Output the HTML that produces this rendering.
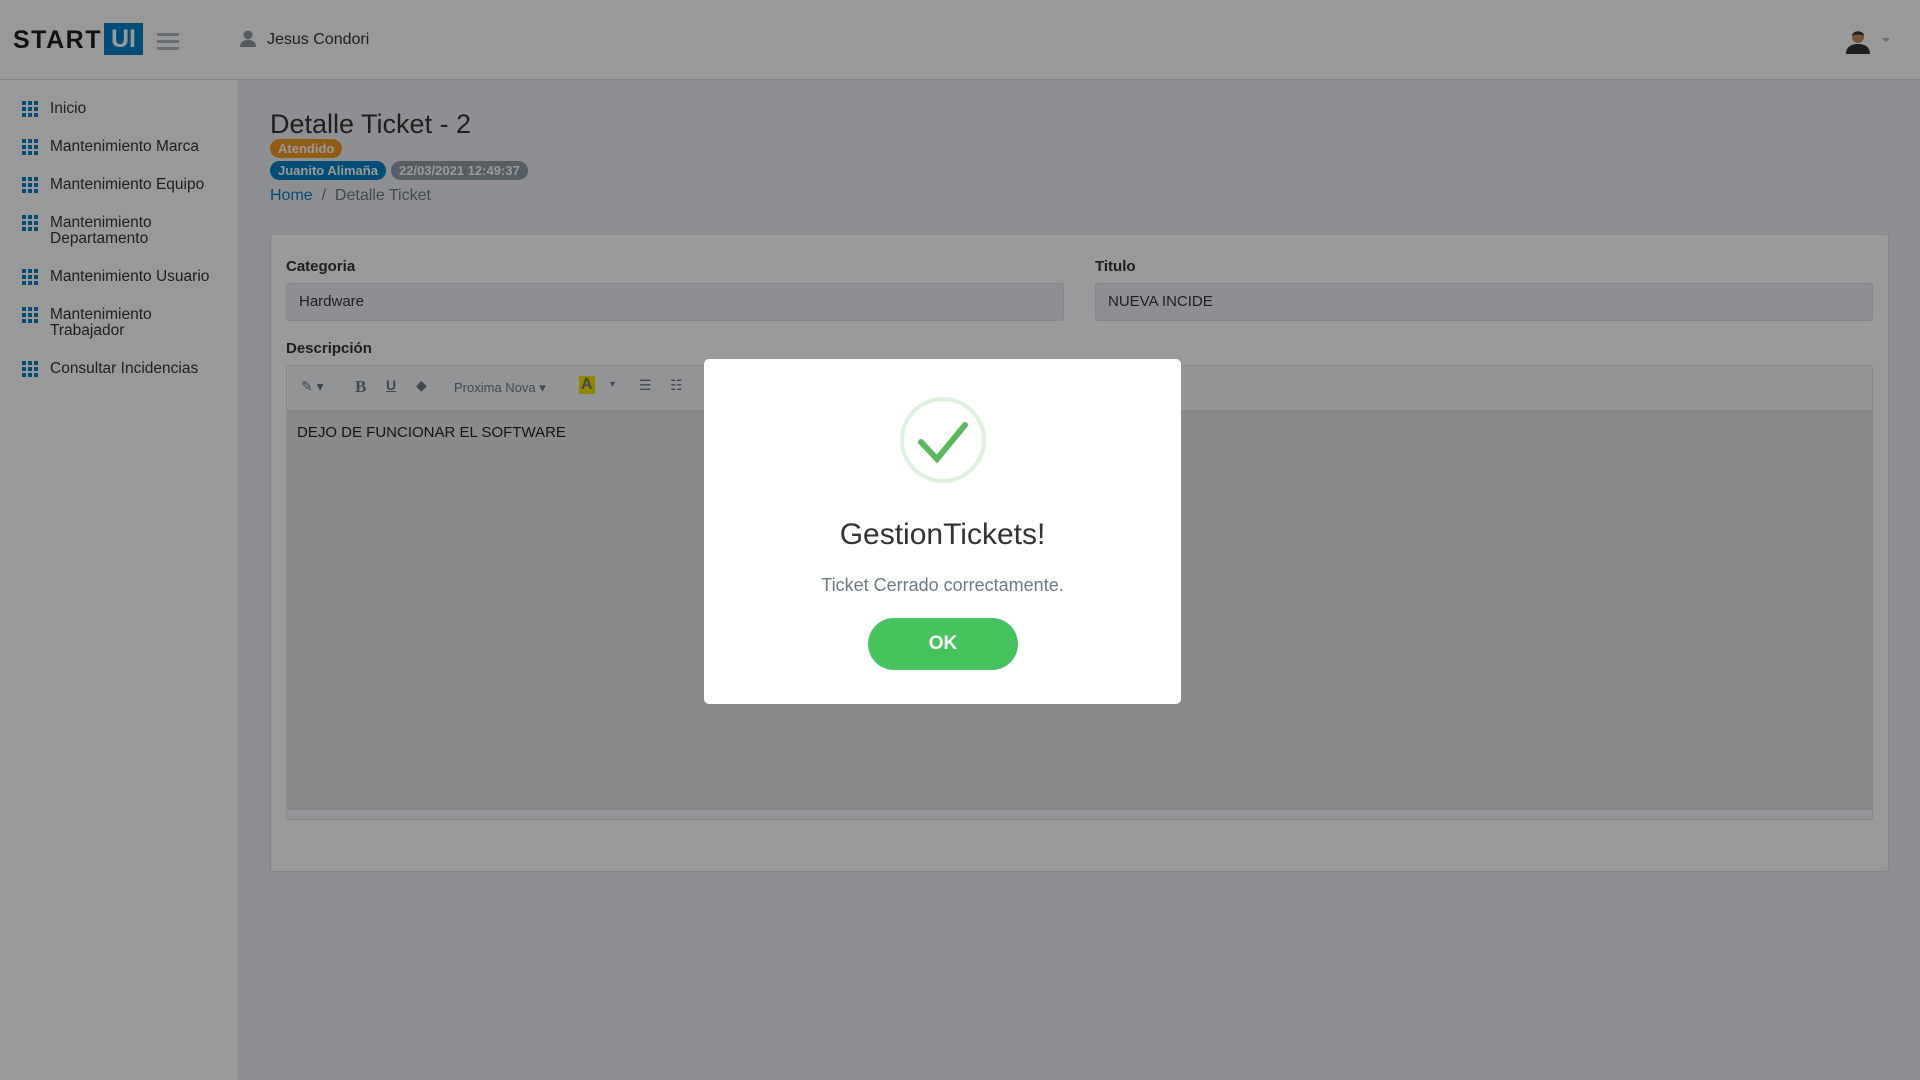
<!DOCTYPE html>
<html><head><meta charset="utf-8"><style>
*{box-sizing:border-box;margin:0;padding:0}
body{width:1920px;height:1080px;overflow:hidden;font-family:"Liberation Sans",sans-serif;background:#eceff4;position:relative;color:#343434}
.hdr{position:absolute;left:0;top:0;width:1920px;height:80px;background:#fff;border-bottom:1px solid #d8e2e7}
.side{position:absolute;left:0;top:80px;width:239px;height:1000px;background:#fff;border-right:1px solid #d8e2e7}
.logo{position:absolute;left:13px;top:26px;font-size:25px;font-weight:bold;color:#1b1f23;letter-spacing:1.5px}
.ui{position:absolute;left:104px;top:23px;width:39px;height:32px;background:#0082c6;color:#fff;font-size:25px;font-weight:bold;text-align:center;line-height:32px}
.ham{position:absolute;left:157px;top:33px;width:22px}
.ham i{display:block;height:3px;background:#adb7be;margin-bottom:4px}
.it{position:absolute;left:50px;font-size:15.5px;color:#343434;line-height:16px}
.grid{position:absolute;left:22px;width:16px;height:16px;display:grid;grid-template-columns:repeat(3,4px);gap:2px}
.grid b{background:#0082c6;width:4px;height:4px}
.badge{position:absolute;height:19px;border-radius:10px;color:#fff;font-size:13px;font-weight:bold;line-height:19px;padding:0 8px}
.card{position:absolute;left:270px;top:234px;width:1619px;height:638px;background:#fff;border:1px solid #d8e2e7;border-radius:3px}
.lbl{position:absolute;font-size:15px;font-weight:bold;color:#343434}
.inp{position:absolute;height:38px;background:#eceff4;border:1px solid #d8e2e7;border-radius:3px;font-size:15px;padding:0 12px;line-height:36px}
.ov{position:absolute;left:0;top:0;width:1920px;height:1080px;background:rgba(0,0,0,.4)}
.modal{position:absolute;left:704px;top:359px;width:477px;height:345px;background:#fff;border-radius:5px}
</style></head><body>
<div class="hdr">
<div class="logo">START</div><div class="ui">UI</div>
<div class="ham"><i></i><i></i><i></i></div>
<svg style="position:absolute;left:240px;top:30px" width="16" height="17" viewBox="0 0 16 17"><circle cx="8" cy="5" r="4.5" fill="#8a96a0"/><path d="M0 17c0-5 3-7 8-7s8 2 8 7z" fill="#8a96a0"/></svg>
<div style="position:absolute;left:267px;top:31px;font-size:16px;color:#343434">Jesus Condori</div>
<svg style="position:absolute;left:1845px;top:28px" width="26" height="26" viewBox="0 0 26 26"><circle cx="13" cy="9" r="6" fill="#c98a5a"/><path d="M7 8c0-6 12-6 12 0c-2-2-10-2-12 0z" fill="#333"/><path d="M1 26c0-7 5-10 12-10s12 3 12 10z" fill="#333"/></svg>
<div style="position:absolute;left:1882px;top:38px;border:4px solid transparent;border-top-color:#adb7be"></div>
</div>
<div class="side">
<div class="grid" style="top:21px"><b></b><b></b><b></b><b></b><b></b><b></b><b></b><b></b><b></b></div><div class="it" style="top:21px">Inicio</div>
<div class="grid" style="top:59px"><b></b><b></b><b></b><b></b><b></b><b></b><b></b><b></b><b></b></div><div class="it" style="top:59px">Mantenimiento Marca</div>
<div class="grid" style="top:97px"><b></b><b></b><b></b><b></b><b></b><b></b><b></b><b></b><b></b></div><div class="it" style="top:97px">Mantenimiento Equipo</div>
<div class="grid" style="top:135px"><b></b><b></b><b></b><b></b><b></b><b></b><b></b><b></b><b></b></div><div class="it" style="top:135px">Mantenimiento<br>Departamento</div>
<div class="grid" style="top:189px"><b></b><b></b><b></b><b></b><b></b><b></b><b></b><b></b><b></b></div><div class="it" style="top:189px">Mantenimiento Usuario</div>
<div class="grid" style="top:227px"><b></b><b></b><b></b><b></b><b></b><b></b><b></b><b></b><b></b></div><div class="it" style="top:227px">Mantenimiento<br>Trabajador</div>
<div class="grid" style="top:281px"><b></b><b></b><b></b><b></b><b></b><b></b><b></b><b></b><b></b></div><div class="it" style="top:281px">Consultar Incidencias</div>
</div>
<div style="position:absolute;left:270px;top:109px;font-size:27px;color:#343434">Detalle Ticket - 2</div>
<div class="badge" style="left:270px;top:139px;background:#f29824">Atendido</div>
<div class="badge" style="left:270px;top:161px;background:#0082c6">Juanito Alimaña</div>
<div class="badge" style="left:391px;top:161px;background:#919fa9">22/03/2021 12:49:37</div>
<div style="position:absolute;left:270px;top:187px;font-size:16px;color:#6c7a86"><span style="color:#0082c6">Home</span> &nbsp;/&nbsp; Detalle Ticket</div>
<div class="card"></div>
<div class="lbl" style="left:286px;top:258px">Categoria</div>
<div class="inp" style="left:286px;top:283px;width:778px">Hardware</div>
<div class="lbl" style="left:1095px;top:258px">Titulo</div>
<div class="inp" style="left:1095px;top:283px;width:778px">NUEVA INCIDE</div>
<div class="lbl" style="left:286px;top:340px">Descripción</div>
<div style="position:absolute;left:286px;top:365px;width:1587px;height:455px;border:1px solid #d8e2e7;border-radius:3px;background:#e6e6e6">
<div style="height:45px;background:#f6f8fa;border-bottom:1px solid #d8e2e7;position:relative;font-size:14px;color:#6c7a86">
<span style="position:absolute;left:14px;top:12px">✎ ▾</span>
<span style="position:absolute;left:68px;top:11px;font-weight:bold;font-family:'Liberation Serif';font-size:17px">B</span>
<span style="position:absolute;left:99px;top:11px;text-decoration:underline;font-weight:bold">U</span>
<span style="position:absolute;left:129px;top:11px">◆</span>
<span style="position:absolute;left:167px;top:14px;font-size:13px">Proxima Nova ▾</span>
<span style="position:absolute;left:292px;top:10px;background:#f4e000;color:#6c7a86;font-weight:bold;font-size:16px;padding:0 2px">A</span>
<span style="position:absolute;left:323px;top:13px;font-size:10px">▾</span>
<span style="position:absolute;left:352px;top:11px">☰</span><span style="position:absolute;left:383px;top:11px">☷</span>
</div>
<div style="position:absolute;left:10px;top:58px;font-size:15px;color:#222">DEJO DE FUNCIONAR EL SOFTWARE</div>
<div style="position:absolute;left:0;bottom:0;width:100%;height:10px;background:#f6f8fa;border-top:1px solid #d8e2e7"></div>
</div>
<div class="ov"></div>
<div class="modal">
<svg style="position:absolute;left:195px;top:37px" width="88" height="88" viewBox="0 0 88 88"><circle cx="44" cy="44" r="41" fill="none" stroke="#dff0e0" stroke-width="4"/><path d="M22 46 L38 63 L66 29" fill="none" stroke="#5cb85c" stroke-width="6" stroke-linecap="round"/></svg>
<div style="position:absolute;left:0;width:100%;top:159px;text-align:center;font-size:30px;color:#333">GestionTickets!</div>
<div style="position:absolute;left:0;width:100%;top:216px;text-align:center;font-size:18px;color:#6c7a86">Ticket Cerrado correctamente.</div>
<div style="position:absolute;left:164px;top:259px;width:150px;height:52px;border-radius:26px;background:#46c35f;color:#fff;font-weight:bold;font-size:19px;text-align:center;line-height:52px">OK</div>
</div>
</body></html>
